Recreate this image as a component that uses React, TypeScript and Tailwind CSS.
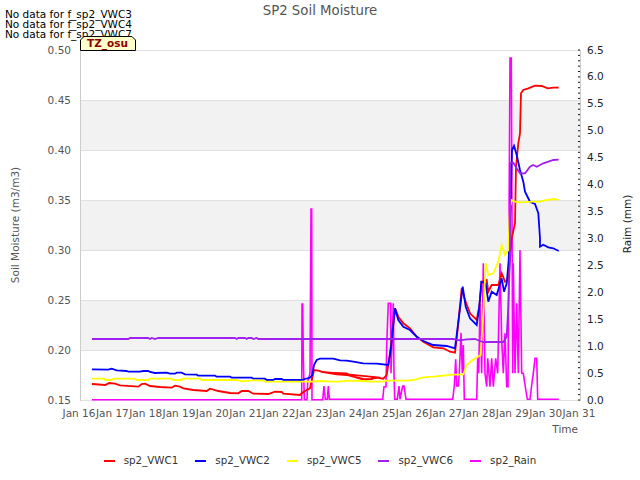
const z = (ox: number, oy: number, s: string) =>
  s.trim().split(/\s+/).map((p) => {
    const [x, y] = p.split(",").map(Number);
    return `${(ox + x / 3).toFixed(1)},${(oy + y / 3).toFixed(1)}`;
  }).join(" ");

const red = [
  z(0, 240, "276,432 316,435 328,429 345,431 360,436 415,440 425,432 435,431 450,438 480,441 515,443 525,437 540,440 550,445 580,450 620,453 630,446 640,449 655,453 690,459 715,460 725,453 745,453 760,461 805,462 825,455 845,456 850,461 900,465 906,459 920,450 930,445"),
  z(290, 200, "72,510 85,512 100,516 115,518 170,520 180,526 200,533 220,539 245,537 255,534 270,533"),
  z(320, 240, "0,395 50,403 80,405 100,410 130,417 150,418 165,412 190,416 200,405 210,340 225,205 235,230 250,250 270,265 290,290 310,305 340,322 370,325 390,335 405,338 412,280 425,145 435,180 450,220 470,240 478,200 485,125 500,120 505,155 515,135 535,135 545,100 555,125 565,120"),
  z(320, 0, "575,715 585,670 588,500 595,430 600,400 603,280 610,270 625,265 645,257 665,258 683,265 700,263 716,263"),
].join(" ");

const blue = [
  z(0, 240, "276,388 325,389 335,386 350,391 380,393 385,395 420,395 430,393 445,393 450,396 465,399 500,398 510,401 525,401 530,398 545,398 555,403 590,404 595,407 645,407 650,410 690,410 695,413 755,413 760,416 795,416 800,420 820,420 825,417 845,417 850,420 905,420 915,417 930,413 937,405 942,375 950,360 960,356"),
  z(320, 240, "0,356 40,356 60,361 80,362 100,365 130,370 170,371 205,375 212,330 225,205 235,240 250,260 270,270 290,290 310,303 340,315 380,318 405,325 412,270 428,140 437,200 450,235 470,255 478,200 484,125 497,130 505,185 515,155 530,165 545,115 552,155 560,130 566,60"),
  z(320, 0, "572,600 576,450 582,437 590,465 600,510 610,545 615,575 630,605 645,612 655,640 660,715"),
  z(320, 240, "660,20 670,14 685,22 700,25 716,33"),
].join(" ");

const yellow = [
  z(0, 240, "276,416 312,416 316,420 335,420 340,417 350,416 405,416 410,420 445,420 450,416 515,416 520,420 545,420 550,416 600,416 605,420 710,420 725,424 760,421 790,422 795,425 935,425 960,423"),
  z(320, 240, "0,423 35,425 60,425 80,422 130,423 150,425 190,425 200,422 260,422 280,420 310,412 340,410 370,407 400,404 430,403 440,375 455,362 470,352 482,346 484,310 490,220 497,70 505,105 520,100 535,65 545,15 555,45 565,30 570,-100"),
  z(320, 0, "575,600 585,605 600,607 640,605 660,605 680,600 705,597 716,600"),
].join(" ");

const purple = [
  z(0, 240, "276,297 385,297 390,294 445,294 450,297 455,294 465,297 475,294 705,294 710,297 715,294 735,294 740,297 745,294 755,294 760,297 770,294 775,297 960,297"),
  z(320, 240, "0,297 400,297 420,301 440,298 465,297 480,303 490,306 550,306 560,290 565,200 570,50"),
  z(320, 0, "570,490 580,488 590,505 600,520 615,520 630,500 640,495 650,500 670,490 700,480 716,479"),
].join(" ");

const rain = z(320, 240,
  "-684,479 -55,479 -54,192 -52,192 -50,350 -47,479 -39,479 -37,425 -30,400 -27,-93 -25,-93 -24,479 8,479 12,438 16,478 22,478 25,438 28,478 188,478 192,440 198,440 200,315 205,190 212,190 213,400 216,315 220,190 222,400 224,478 232,478 237,438 240,478 248,438 252,438 258,478 398,478 403,438 407,358 410,438 415,438 418,400 423,278 427,400 430,315 433,478 470,478 473,355 476,400 480,193 485,400 490,70 495,400 500,440 503,355 510,440 515,355 520,440 527,355 533,400 540,70 545,300 550,400 555,280 560,440 564,440 570,-546 574,-546 578,400 580,70 585,400 590,190 595,400 600,30 605,400 610,400 615,435 622,478 630,478 635,435 640,400 645,355 650,355 653,478 716,478"
);

const minor = Array.from({ length: 66 }, (_, i) => 400 - (i * 350) / 65);
const xLabels = Array.from({ length: 16 }, (_, i) => i);
const rightLabels = ["0.0", "0.5", "1.0", "1.5", "2.0", "2.5", "3.0", "3.5", "4.0", "4.5", "5.0", "5.5", "6.0", "6.5"];
const leftLabels = ["0.15", "0.20", "0.25", "0.30", "0.35", "0.40", "0.45", "0.50"];

const legend = [
  { name: "sp2_VWC1", color: "bg-[#ff0000]" },
  { name: "sp2_VWC2", color: "bg-[#0000ff]" },
  { name: "sp2_VWC5", color: "bg-[#ffff00]" },
  { name: "sp2_VWC6", color: "bg-[#a020f0]" },
  { name: "sp2_Rain", color: "bg-[#ff00ff]" },
];

export default function App() {
  return (
    <div className="relative w-[640px] h-[480px] bg-white overflow-hidden flex flex-col font-['DejaVu_Sans',sans-serif]">
      <div className="h-[22px] flex items-center justify-center text-[13.3px] text-[#555555]">SP2 Soil Moisture</div>
      <svg width={640} height={423} viewBox="0 22 640 423" className="block relative z-10 font-['DejaVu_Sans',sans-serif]">
        {[100, 200, 300].map((y) => (
          <rect key={y} x={80} y={y} width={500} height={50} fill="#f2f2f2" />
        ))}
        {[50, 100, 150, 200, 250, 300, 350, 400].map((y) => (
          <line key={y} x1={80} x2={580} y1={y + 0.5} y2={y + 0.5} stroke="#e0e0e0" />
        ))}
        <line x1={80.5} x2={80.5} y1={50} y2={401} stroke="#cccccc" />
        <line x1={580.5} x2={580.5} y1={50} y2={401} stroke="#cccccc" />
        {minor.map((y, i) => (
          <line key={i} x1={578} x2={580} y1={y} y2={y} stroke="#111111" strokeWidth={1} />
        ))}
        {leftLabels.map((t, i) => (
          <text key={t} x={71} y={403.5 - i * 50} textAnchor="end" fontSize={10.5} fill="#555555">{t}</text>
        ))}
        {rightLabels.map((t, i) => (
          <text key={t} x={587} y={403.5 - (i * 350) / 13} fontSize={10.5} fill="#222222">{t}</text>
        ))}
        {xLabels.map((i) => (
          <text key={i} x={79 + i * 33.33} y={417} textAnchor="middle" fontSize={10.5} fill="#555555">{`Jan ${16 + i}`}</text>
        ))}
        <text x={578} y={433} textAnchor="end" fontSize={10.5} fill="#555555">Time</text>
        <text transform="translate(19,225) rotate(-90)" textAnchor="middle" fontSize={10.5} fill="#555555">Soil Moisture (m3/m3)</text>
        <text transform="translate(631,224) rotate(-90)" textAnchor="middle" fontSize={10.5} fill="#222222">Raim (mm)</text>

        <polyline points={rain} fill="none" stroke="#ff00ff" strokeWidth={1.6} />
        <polyline points={red} fill="none" stroke="#ff0000" strokeWidth={1.8} />
        <polyline points={blue} fill="none" stroke="#0000ff" strokeWidth={1.8} />
        <polyline points={yellow} fill="none" stroke="#ffff00" strokeWidth={1.8} />
        <polyline points={purple} fill="none" stroke="#a020f0" strokeWidth={1.8} />

        <polygon points="80.5,50.5 80.5,40 84,36.5 132,36.5 135.5,40 135.5,50.5" fill="#ffffcc" stroke="#000000" strokeWidth={1} />
        <text x={107.5} y={46.5} textAnchor="middle" fontSize={10.5} fontWeight={700} fill="#8b0000">TZ_osu</text>
      </svg>
      <div className="flex-1 flex items-center justify-center gap-[17px] pb-[3px] text-[10.3px] text-[#333333]">
        {legend.map((l) => (
          <div key={l.name} className="flex items-center gap-[9px]">
            <span className={`block w-[11px] h-[2px] ${l.color}`} />
            <span>{l.name}</span>
          </div>
        ))}
      </div>
      <div className="absolute left-[5px] top-[9px] text-[10.5px] leading-[10px] text-black">
        <div>No data for f_sp2_VWC3</div>
        <div>No data for f_sp2_VWC4</div>
        <div>No data for f_sp2_VWC7</div>
      </div>
    </div>
  );
}
